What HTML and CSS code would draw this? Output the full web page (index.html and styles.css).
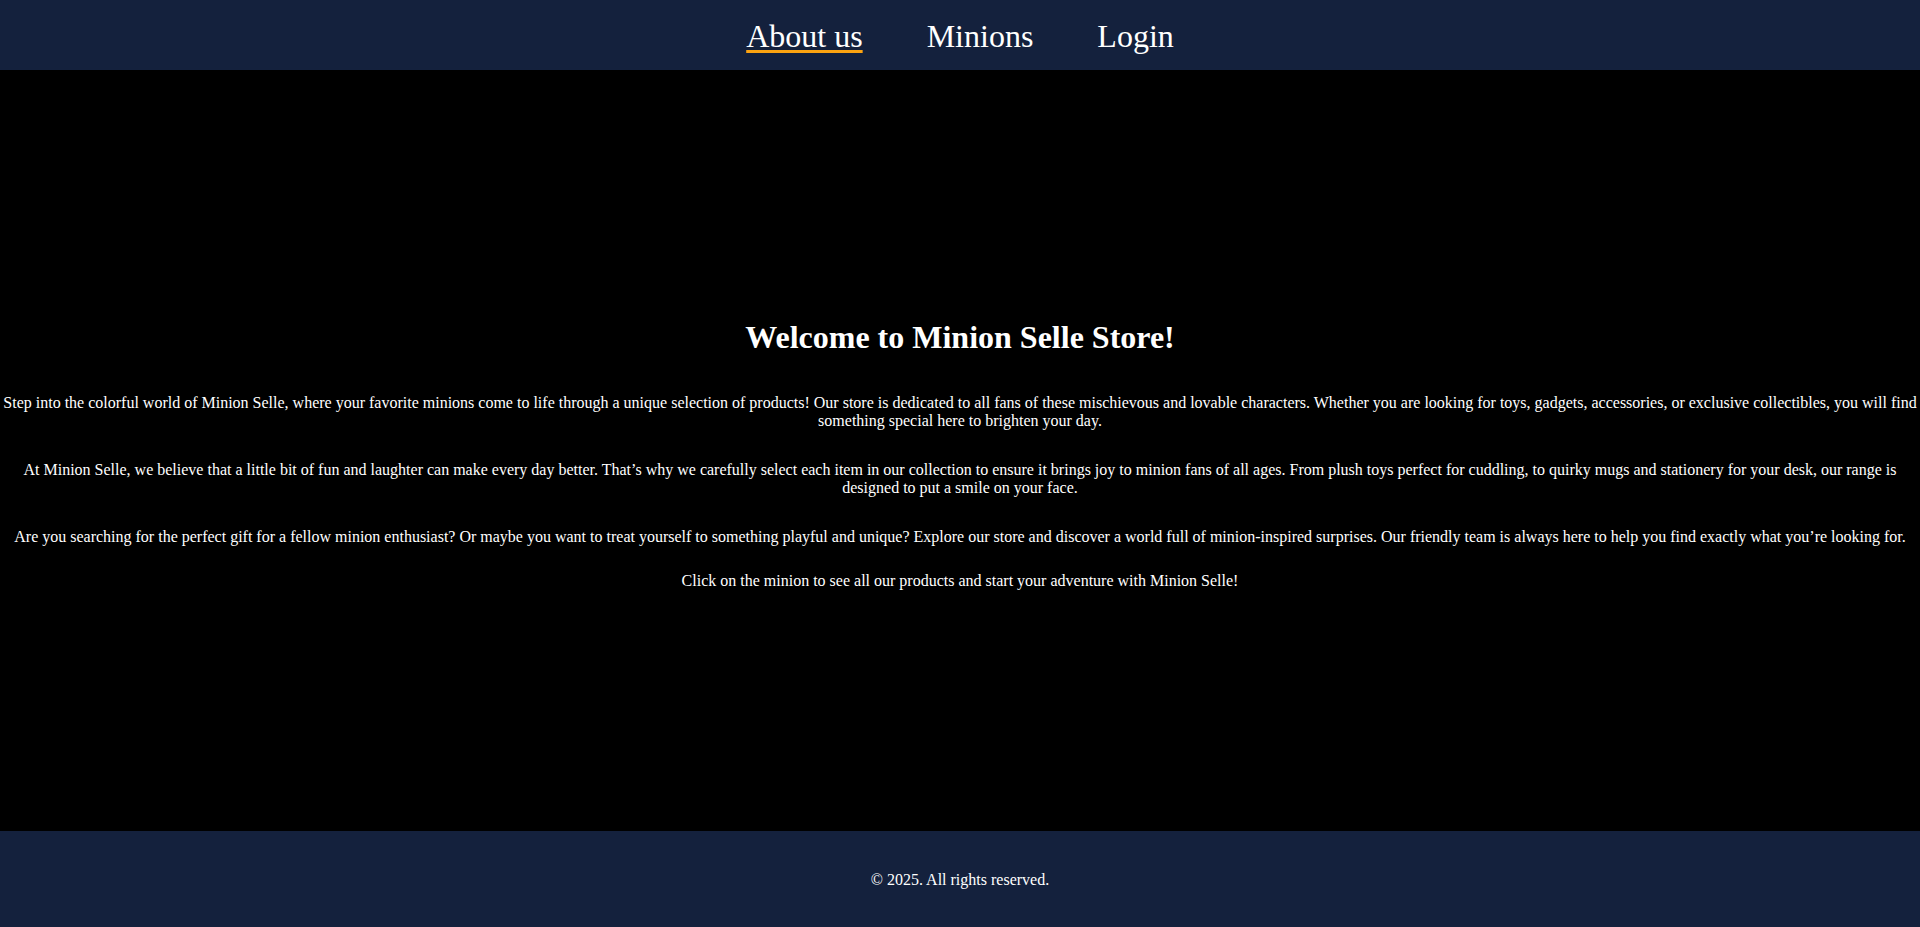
FILE: index.html
```html
<!DOCTYPE html>
<html lang="en">
<head>
<meta charset="utf-8">
<title>Minion Selle Store</title>
<link rel="stylesheet" href="styles.css">
</head>
<body>
<div class="page">
  <header class="site-header">
    <nav class="nav">
      <a class="nav-link is-active" href="#">About us</a>
      <a class="nav-link" href="#">Minions</a>
      <a class="nav-link" href="#">Login</a>
    </nav>
  </header>
  <main class="main">
    <section class="intro">
      <h1 class="intro-title">Welcome to Minion Selle Store!</h1>
      <p class="intro-text">Step into the colorful world of Minion Selle, where your favorite minions come to life through a unique selection of products! Our store is dedicated to all fans of these mischievous and lovable characters. Whether you are looking for toys, gadgets, accessories, or exclusive collectibles, you will find something special here to brighten your day.</p>
      <p class="intro-text">At Minion Selle, we believe that a little bit of fun and laughter can make every day better. That’s why we carefully select each item in our collection to ensure it brings joy to minion fans of all ages. From plush toys perfect for cuddling, to quirky mugs and stationery for your desk, our range is designed to put a smile on your face.</p>
      <p class="intro-text intro-text-wide">Are you searching for the perfect gift for a fellow minion enthusiast? Or maybe you want to treat yourself to something playful and unique? Explore our store and discover a world full of minion-inspired surprises. Our friendly team is always here to help you find exactly what you’re looking for.</p>
      <p class="intro-text intro-cta">Click on the minion to see all our products and start your adventure with Minion Selle!</p>
    </section>
  </main>
  <footer class="site-footer">
    <p class="footer-text">© 2025. All rights reserved.</p>
  </footer>
</div>
</body>
</html>
```

FILE: styles.css
```css
html, body {
  margin: 0;
  padding: 0;
  background: #000;
}

body {
  font-family: "Liberation Serif", "Times New Roman", serif;
  color: #fff;
  font-size: 16px;
}

.page {
  display: flex;
  flex-direction: column;
  min-height: 927px;
}

.site-header {
  background: #14213d;
  height: 70px;
  box-sizing: border-box;
  padding-top: 18px;
  display: flex;
  justify-content: center;
  align-items: flex-start;
}

.nav {
  display: flex;
  gap: 64px;
}

.nav-link {
  color: #fff;
  font-size: 32px;
  line-height: normal;
  text-decoration: none;
}

.nav-link.is-active {
  text-decoration: underline;
  text-decoration-color: #fca311;
  text-decoration-thickness: 3px;
  text-underline-offset: 3px;
  text-decoration-skip-ink: none;
}

.main {
  height: 761px;
  box-sizing: border-box;
  padding-top: 7px;
  display: flex;
  flex-direction: column;
  justify-content: center;
  background: #000;
}

.intro {
  text-align: center;
}

.intro-title {
  font-size: 32px;
  font-weight: bold;
  line-height: normal;
  margin: 0 0 38px;
}

.intro-text {
  margin: 0 0 31px;
  line-height: normal;
}

.intro-text-wide {
  margin-top: 1px;
  margin-bottom: 26px;
}

.intro-cta {
  margin-bottom: 0;
}

.site-footer {
  background: #14213d;
  height: 96px;
  box-sizing: border-box;
  padding-top: 40px;
  text-align: center;
}

.footer-text {
  margin: 0;
  line-height: normal;
}
```
